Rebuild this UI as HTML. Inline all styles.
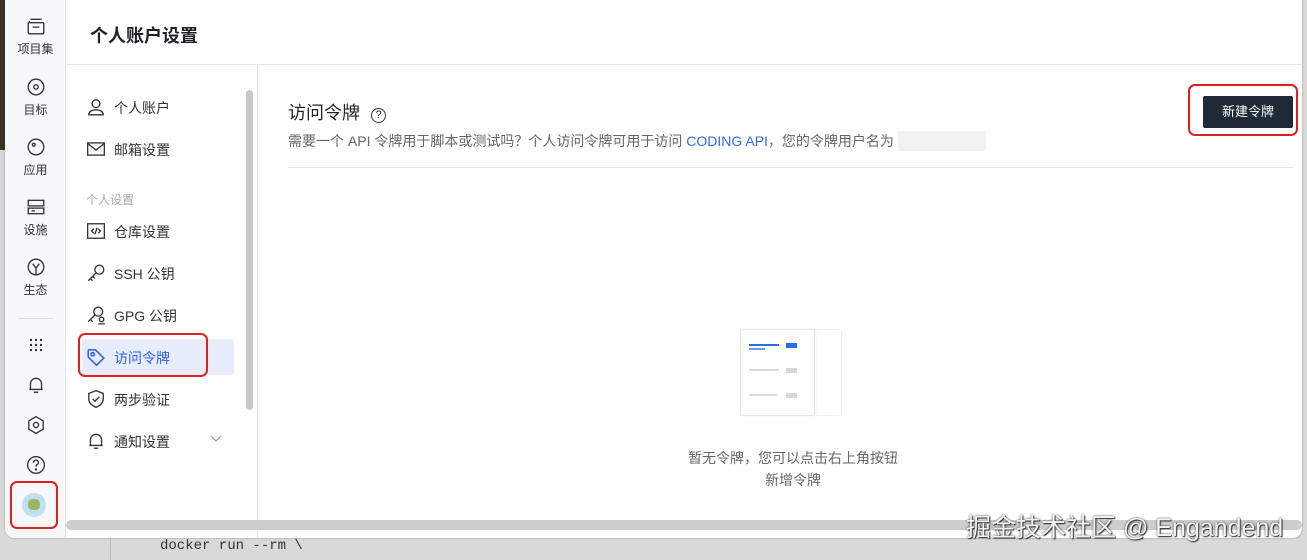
<!DOCTYPE html>
<html><head><meta charset="utf-8"><style>
*{margin:0;padding:0;box-sizing:border-box}
body{width:1307px;height:560px;overflow:hidden;background:#d9d9d9;font-family:"Liberation Sans","Noto Sans CJK SC",sans-serif;position:relative}
.desk{position:absolute;left:0;top:0;width:8px;height:150px;background:#3a3424}
.win{position:absolute;left:5px;top:0;width:1297px;height:538px;background:#fff;border-radius:0 0 10px 10px;overflow:hidden;box-shadow:0 0 2px rgba(0,0,0,.3)}
.side{position:absolute;left:0;top:0;width:61px;height:100%;background:#f7f8fa;border-right:1px solid #e3e5e8}
.si{position:absolute;left:0;width:61px;text-align:center;font-size:12px;color:#333}
.si svg{display:block;margin:0 auto 4px}
.hdr{position:absolute;left:61px;top:0;right:0;height:65px;border-bottom:1px solid #e3e5e8;font-size:18px;color:#1f2329;padding:22px 0 0 24px;font-weight:bold}
.nav{position:absolute;left:61px;top:65px;width:192px;bottom:0;border-right:1px solid #e3e5e8}
.ni{position:absolute;left:16px;width:152px;height:36px;font-size:14px;color:#333;padding:9px 0 0 32px}
.ni svg{position:absolute;left:4px;top:8px}
.scroll{position:absolute;left:180px;top:25px;width:7px;height:320px;background:#c8c8c8;border-radius:4px}
.main{position:absolute;left:253px;top:65px;right:0;bottom:0}
.red{position:absolute;border:2px solid #e02020;border-radius:7px}
</style></head><body>
<div class="desk"></div>
<div style="position:absolute;left:110px;top:538px;width:1px;height:22px;background:#bbb"></div>
<div style="position:absolute;left:160px;top:538px;font:14px 'Liberation Mono',monospace;color:#333">docker run --rm \</div>
<div class="win">
<div class="side">
 <div class="si" style="top:16px"><svg width="20" height="20" viewBox="0 0 18 18" fill="none" stroke="#333" stroke-width="1.2"><rect x="2" y="6" width="14" height="10" rx="1"/><path d="M4 3h10M3 6V4.5M6 10h6"/></svg>项目集</div>
 <div class="si" style="top:77px"><svg width="20" height="20" viewBox="0 0 18 18" fill="none" stroke="#333" stroke-width="1.2"><circle cx="9" cy="9" r="7"/><circle cx="9" cy="9" r="2"/></svg>目标</div>
 <div class="si" style="top:137px"><svg width="20" height="20" viewBox="0 0 18 18" fill="none" stroke="#333" stroke-width="1.2"><circle cx="9" cy="9" r="7"/><circle cx="7" cy="7" r="1.3"/></svg>应用</div>
 <div class="si" style="top:197px"><svg width="20" height="20" viewBox="0 0 18 18" fill="none" stroke="#333" stroke-width="1.2"><rect x="2" y="3" width="14" height="5"/><rect x="2" y="10" width="14" height="5"/><path d="M5 12.5h3"/></svg>设施</div>
 <div class="si" style="top:257px"><svg width="20" height="20" viewBox="0 0 18 18" fill="none" stroke="#333" stroke-width="1.2"><circle cx="9" cy="9" r="7"/><path d="M6 6l3 4 3-4M9 10v6"/></svg>生态</div>
 <div style="position:absolute;left:13px;top:318px;width:35px;height:1px;background:#ddd"></div>
 <div class="si" style="top:336px"><svg width="18" height="18" viewBox="0 0 18 18" fill="#333"><circle cx="4" cy="4" r="1.2"/><circle cx="9" cy="4" r="1.2"/><circle cx="14" cy="4" r="1.2"/><circle cx="4" cy="9" r="1.2"/><circle cx="9" cy="9" r="1.2"/><circle cx="14" cy="9" r="1.2"/><circle cx="4" cy="14" r="1.2"/><circle cx="9" cy="14" r="1.2"/><circle cx="14" cy="14" r="1.2"/></svg></div>
 <div class="si" style="top:375px"><svg width="20" height="20" viewBox="0 0 18 18" fill="none" stroke="#333" stroke-width="1.2"><path d="M4 13V8a5 5 0 0110 0v5H3h12M7 15.5h4"/></svg></div>
 <div class="si" style="top:415px"><svg width="20" height="20" viewBox="0 0 18 18" fill="none" stroke="#333" stroke-width="1.2"><path d="M9 1.5l6.5 3.75v7.5L9 16.5l-6.5-3.75v-7.5z"/><circle cx="9" cy="9" r="2.3"/></svg></div>
 <div class="si" style="top:455px"><svg width="20" height="20" viewBox="0 0 18 18" fill="none" stroke="#333" stroke-width="1.2"><circle cx="9" cy="9" r="7.5"/><path d="M6.8 7a2.2 2.2 0 114 1c-1 .8-1.8 1-1.8 2.5"/><circle cx="9" cy="13" r=".5" fill="#333"/></svg></div>
 <div style="position:absolute;left:17px;top:493px;width:24px;height:24px;border-radius:50%;background:#bfe0ef"><div style="position:absolute;left:6px;top:6px;width:12px;height:11px;background:#9bb56a;border-radius:40%"></div></div>
</div>
<div class="red" style="left:5px;top:481px;width:48px;height:48px"></div>
<div class="hdr">个人账户设置</div>
<div class="nav">
 <div class="scroll"></div>
 <div class="ni" style="top:24px"><svg width="20" height="20" viewBox="0 0 18 18" fill="none" stroke="#333" stroke-width="1.2"><circle cx="9" cy="6" r="3.5"/><path d="M2.5 16c0-3 3-4.5 6.5-4.5s6.5 1.5 6.5 4.5z"/></svg>个人账户</div>
 <div class="ni" style="top:66px"><svg width="20" height="20" viewBox="0 0 18 18" fill="none" stroke="#333" stroke-width="1.2"><rect x="1.5" y="3.5" width="15" height="11"/><path d="M1.5 4l7.5 6 7.5-6"/></svg>邮箱设置</div>
 <div style="position:absolute;left:20px;top:126px;font-size:12px;color:#aaa">个人设置</div>
 <div class="ni" style="top:148px"><svg width="20" height="20" viewBox="0 0 18 18" fill="none" stroke="#333" stroke-width="1.2"><rect x="1.5" y="2.5" width="15" height="13"/><path d="M7 7l-2 2 2 2M11 7l2 2-2 2M10 6l-2 6"/></svg>仓库设置</div>
 <div class="ni" style="top:190px"><svg width="20" height="20" viewBox="0 0 18 18" fill="none" stroke="#333" stroke-width="1.2"><circle cx="12" cy="6" r="4"/><path d="M9 9l-7 7M4 14l2 2M6 12l2 2"/></svg>SSH 公钥</div>
 <div class="ni" style="top:232px"><svg width="20" height="20" viewBox="0 0 18 18" fill="none" stroke="#333" stroke-width="1.2"><circle cx="11" cy="6" r="4"/><path d="M8 9l-6 6M4 13l2 2M12 13a2 2 0 104 0 2 2 0 00-4 0M11 17h6"/></svg>GPG 公钥</div>
 <div class="ni" style="top:274px;background:#e8edfd;color:#2e5fe6;border-radius:3px"><svg width="20" height="20" viewBox="0 0 18 18" fill="none" stroke="#2e5fe6" stroke-width="1.4"><path d="M2 3v6l7.5 7.5 6.5-6.5L8.5 2.5H2.5z"/><circle cx="6" cy="6.5" r="1.5"/></svg>访问令牌</div>
 <div class="ni" style="top:316px"><svg width="20" height="20" viewBox="0 0 18 18" fill="none" stroke="#333" stroke-width="1.2"><path d="M9 1.5l6.5 2.5v5c0 4-3 6-6.5 7.5C5.5 15 2.5 13 2.5 9V4z"/><path d="M6 9l2 2 4-4"/></svg>两步验证</div>
 <div class="ni" style="top:358px"><svg width="20" height="20" viewBox="0 0 18 18" fill="none" stroke="#333" stroke-width="1.2"><path d="M4 13V8a5 5 0 0110 0v5H3h12M7 15.5h4"/></svg>通知设置<svg style="left:128px;top:12px" width="12" height="8" viewBox="0 0 12 8" fill="none" stroke="#999" stroke-width="1.2"><path d="M1 1l5 5 5-5"/></svg></div>
</div>
<div class="red" style="left:73px;top:333px;width:130px;height:44px"></div>
<div class="main">
 <div style="position:absolute;left:30px;top:34px;font-size:18px;color:#1f2329">访问令牌 <span style="display:inline-block;width:15px;height:15px;border:1.3px solid #333;border-radius:50%;font-size:11px;text-align:center;line-height:13px;vertical-align:1px;margin-left:6px">?</span></div>
 <div style="position:absolute;left:30px;top:66px;font-size:14px;color:#666">需要一个 API 令牌用于脚本或测试吗？个人访问令牌可用于访问 <span style="color:#2e6be6">CODING API</span>，您的令牌用户名为 <span style="display:inline-block;width:88px;height:20px;background:#f2f2f2;vertical-align:-5px"></span></div>
 <div style="position:absolute;left:30px;top:102px;width:1005px;height:1px;background:#e6e6e6"></div>
 <div style="position:absolute;left:945px;top:31px;width:90px;height:32px;background:#1f2937;color:#fff;font-size:13px;text-align:center;line-height:32px;border-radius:2px">新建令牌</div>
 <div style="position:absolute;left:482px;top:264px;width:102px;height:87px;border:1px solid #eef0f3;border-radius:3px;background:#fff"></div>
 <div style="position:absolute;left:482px;top:264px;width:75px;height:87px;border:1px solid #e3e6ea;border-radius:3px;background:#fff;box-shadow:1px 0 2px rgba(0,0,0,.05)">
  <div style="position:absolute;left:8px;top:14px;width:30px;height:2px;background:#2e6be6"></div>
  <div style="position:absolute;left:8px;top:18px;width:16px;height:1.5px;background:#6b9af0"></div>
  <div style="position:absolute;left:45px;top:13px;width:11px;height:5px;background:#2e6be6"></div>
  <div style="position:absolute;left:8px;top:39px;width:30px;height:2px;background:#d6d9de"></div>
  <div style="position:absolute;left:45px;top:38px;width:11px;height:5px;background:#d4d6da"></div>
  <div style="position:absolute;left:8px;top:64px;width:28px;height:2px;background:#d6dde6"></div>
  <div style="position:absolute;left:45px;top:63px;width:11px;height:5px;background:#d4d6da"></div>
 </div>
 <div style="position:absolute;left:375px;top:382px;width:320px;text-align:center;font-size:14px;color:#666;line-height:22px">暂无令牌，您可以点击右上角按钮<br>新增令牌</div>
</div>
<div class="red" style="left:1183px;top:84px;width:110px;height:52px"></div>
<div style="position:absolute;left:61px;top:520px;width:1236px;height:10px;background:#cdcdcd;border-radius:5px"></div>
</div>
<div style="position:absolute;left:966px;top:508px;font-size:25px;color:#f4f4f4;text-shadow:0 0 2px #333,1px 1px 1px #333">掘金技术社区 @ Engandend</div>
</body></html>
